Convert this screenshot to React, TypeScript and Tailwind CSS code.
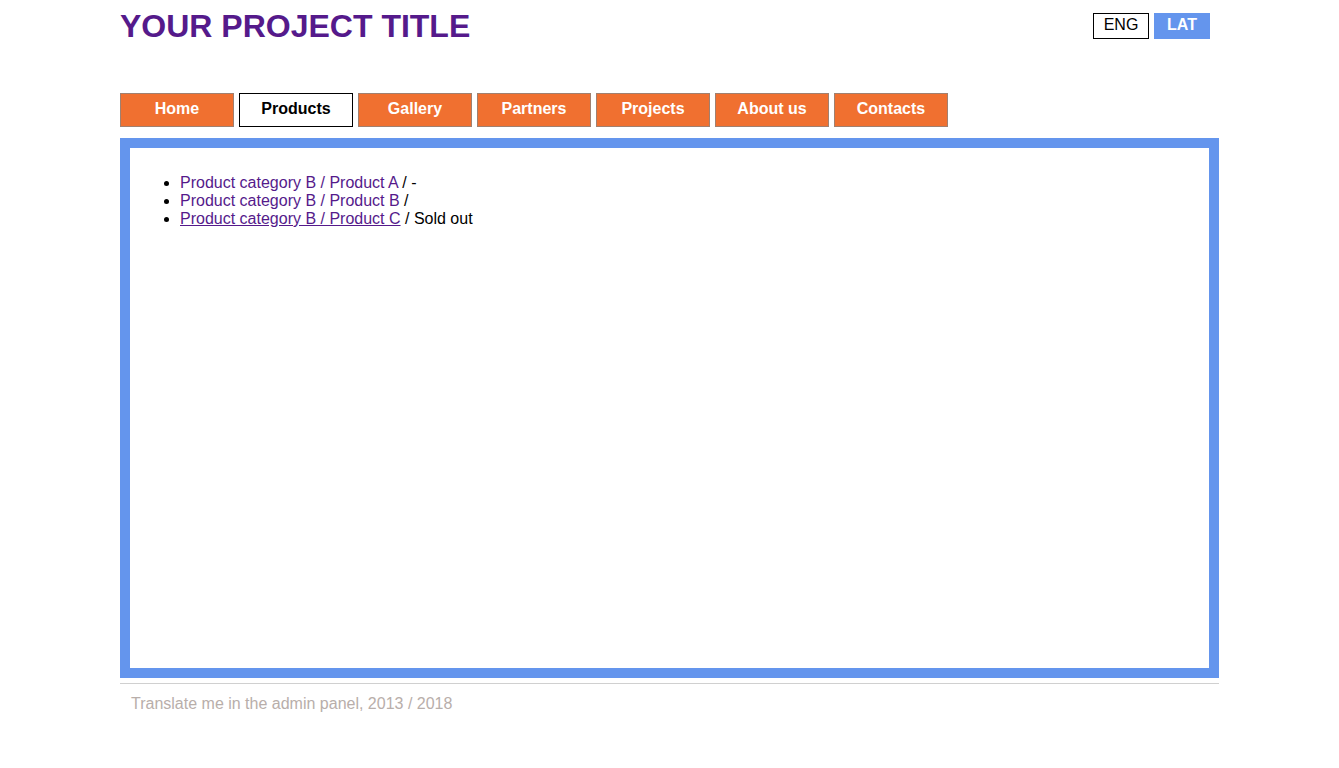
import React from "react";

const navItems = ["Home", "Products", "Gallery", "Partners", "Projects", "About us", "Contacts"];

export default function App() {
  return (
    <div className="min-h-screen bg-white" style={{ fontFamily: '"Liberation Sans", Arial, sans-serif' }}>
      <div className="mx-auto w-[1099px]">
        <header className="flex justify-between h-[93px]">
          <h1 className="pt-[8px] text-[32px] leading-[37px] font-bold text-[#551a8b]">YOUR PROJECT TITLE</h1>
          <div className="flex gap-[5px] pt-[13px] pr-[9px]">
            <div className="w-[56px] h-[26px] border border-black text-[16px] leading-[22px] text-center text-black">ENG</div>
            <div className="w-[56px] h-[26px] border border-[#6495ed] bg-[#6495ed] text-[16px] leading-[22px] text-center font-bold text-white">LAT</div>
          </div>
        </header>
        <nav className="flex gap-[5px]">
          {navItems.map((n) =>
            n === "Products" ? (
              <div key={n} className="w-[114px] h-[34px] border border-black bg-white text-black font-bold text-[16px] leading-[30px] text-center">
                {n}
              </div>
            ) : (
              <div key={n} className="w-[114px] h-[34px] border border-[#a08070] bg-[#f07030] text-white font-bold text-[16px] leading-[30px] text-center">
                {n}
              </div>
            )
          )}
        </nav>
        <main className="mt-[11px] h-[540px] border-[10px] border-[#6495ed] bg-white p-[10px]">
          <ul className="list-disc pl-10 mt-4 text-[16px] leading-[18px]">
            <li>
              <span className="text-[#551a8b]">Product category B / Product A</span> / -
            </li>
            <li>
              <span className="text-[#551a8b]">Product category B / Product B</span> /
            </li>
            <li>
              <span className="text-[#551a8b] underline">Product category B / Product C</span> / Sold out
            </li>
          </ul>
        </main>
        <div className="mt-[5px] border-t border-[#d0d0d0]" />
        <p className="pl-[11px] mt-[11px] text-[16px] leading-[18px] text-[#b8aeaa]">Translate me in the admin panel, 2013 / 2018</p>
      </div>
    </div>
  );
}
